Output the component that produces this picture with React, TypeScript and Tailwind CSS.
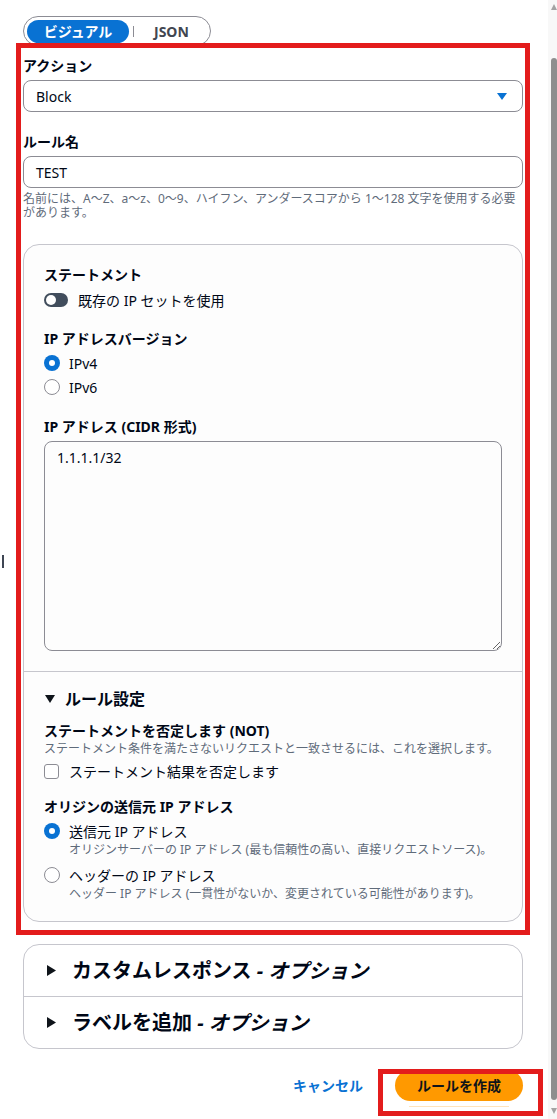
import type { ReactNode } from 'react'

const FONT = "font-['Noto_Sans','Noto_Sans_CJK_JP',sans-serif]"

function Radio({ checked }: { checked?: boolean }) {
  if (checked) {
    return (
      <span className="w-[16px] h-[16px] shrink-0 rounded-full bg-[#0972d3] flex items-center justify-center">
        <span className="w-[6px] h-[6px] rounded-full bg-white" />
      </span>
    )
  }
  return <span className="w-[16px] h-[16px] shrink-0 rounded-full border-[1.5px] border-[#8c8c94] bg-white" />
}

function Label({ children, className = '' }: { children: ReactNode; className?: string }) {
  return <p className={`text-[14px] font-bold leading-[22px] ${className}`}>{children}</p>
}

function CaretRight() {
  return (
    <svg width="9" height="11" viewBox="0 0 9 11" className="shrink-0">
      <path d="M0 0 L9 5.5 L0 11 Z" fill="#0f141a" />
    </svg>
  )
}

export default function App() {
  return (
    <div className={`relative w-[557px] h-[1119px] bg-white flex overflow-hidden text-[#000716] ${FONT}`}>
      <div className="w-[548px] pl-[23px] pr-[25px] flex flex-col">
        {/* mode switch */}
        <div className="mt-[16px] h-[30px] w-[188px] rounded-full border border-[#8c8c94] flex items-center px-[3px]">
          <span className="h-[23px] w-[102px] rounded-full bg-[#0972d3] text-white text-[14px] font-bold flex items-center justify-center">
            ビジュアル
          </span>
          <span className="ml-[4px] w-[1px] h-[11px] bg-[#8c8c94]" />
          <span className="ml-[20px] text-[14px] font-bold text-[#424650]">JSON</span>
        </div>

        <Label className="mt-[9px]">アクション</Label>
        <div className="mt-[3px] h-[32px] rounded-[8px] border border-[#8c8c94] flex items-center pl-[12px] pr-[15px]">
          <span className="text-[14px]">Block</span>
          <svg width="10" height="7" viewBox="0 0 10 7" className="ml-auto">
            <path d="M0 0 L10 0 L5 7 Z" fill="#0972d3" />
          </svg>
        </div>

        <Label className="mt-[19px]">ルール名</Label>
        <div className="mt-[3px] h-[32px] rounded-[8px] border border-[#8c8c94] flex items-center px-[12px]">
          <span className="text-[14px]">TEST</span>
        </div>
        <p className="mt-[4px] text-[12px] leading-[14px] text-[#5f6b7a]">
          名前には、A〜Z、a〜z、0〜9、ハイフン、アンダースコアから 1〜128 文字を使用する必要があります。
        </p>

        {/* statement card */}
        <div className="mt-[24px] rounded-[16px] border border-[#c6c6cd] bg-[#fdfdfd]">
          <div className="px-[20px] pt-[19px] pb-[20px]">
            <Label>ステートメント</Label>
            <div className="mt-[3px] h-[22px] flex items-center gap-[10px]">
              <span className="w-[24px] h-[14px] rounded-full bg-[#414d5c] flex items-center pl-[2px]">
                <span className="w-[10px] h-[10px] rounded-full bg-white" />
              </span>
              <span className="text-[14px]">既存の IP セットを使用</span>
            </div>

            <Label className="mt-[17px]">IP アドレスバージョン</Label>
            <div className="mt-[1px] h-[24px] flex items-center gap-[9px]">
              <Radio checked />
              <span className="text-[14px]">IPv4</span>
            </div>
            <div className="h-[24px] flex items-center gap-[9px]">
              <Radio />
              <span className="text-[14px]">IPv6</span>
            </div>

            <Label className="mt-[17px]">IP アドレス (CIDR 形式)</Label>
            <textarea
              readOnly
              defaultValue="1.1.1.1/32"
              className="mt-[3px] block w-full h-[210px] rounded-[8px] border border-[#8c8c94] bg-[#fdfdfd] px-[12px] py-[5px] text-[14px] leading-[22px] outline-none"
            />
          </div>

          <div className="border-t border-[#c6c6cd] px-[20px] pt-[16px] pb-[19px]">
            <div className="h-[22px] flex items-center">
              <svg width="10" height="8" viewBox="0 0 10 8" className="ml-[1px]">
                <path d="M0 0 L10 0 L5 8 Z" fill="#0f141a" />
              </svg>
              <span className="ml-[10px] text-[16px] font-bold">ルール設定</span>
            </div>

            <p className="mt-[11px] text-[14px] font-bold leading-[20px]">ステートメントを否定します (NOT)</p>
            <p className="text-[12px] leading-[16px] text-[#5f6b7a]">
              ステートメント条件を満たさないリクエストと一致させるには、これを選択します。
            </p>
            <div className="mt-[3px] h-[22px] flex items-center gap-[10px]">
              <span className="w-[15px] h-[15px] rounded-[3px] border-[1.5px] border-[#8c8c94] bg-white" />
              <span className="text-[14px]">ステートメント結果を否定します</span>
            </div>

            <p className="mt-[15px] text-[14px] font-bold leading-[20px]">オリジンの送信元 IP アドレス</p>
            <div className="mt-[3px] h-[22px] flex items-center gap-[9px]">
              <Radio checked />
              <span className="text-[14px]">送信元 IP アドレス</span>
            </div>
            <p className="pl-[25px] text-[12px] leading-[16px] text-[#5f6b7a]">
              オリジンサーバーの IP アドレス (最も信頼性の高い、直接リクエストソース)。
            </p>
            <div className="mt-[6px] h-[22px] flex items-center gap-[9px]">
              <Radio />
              <span className="text-[14px]">ヘッダーの IP アドレス</span>
            </div>
            <p className="pl-[25px] text-[12px] leading-[16px] text-[#5f6b7a]">
              ヘッダー IP アドレス (一貫性がないか、変更されている可能性があります)。
            </p>
          </div>
        </div>

        {/* optional sections */}
        <div className="mt-[22px] rounded-[16px] border border-[#c6c6cd]">
          <div className="h-[51px] flex items-center pl-[23px] gap-[16px]">
            <CaretRight />
            <span className="text-[20px] font-bold">
              カスタムレスポンス <i>- オプション</i>
            </span>
          </div>
          <div className="h-[52px] border-t border-[#c6c6cd] flex items-center pl-[23px] gap-[16px]">
            <CaretRight />
            <span className="text-[20px] font-bold">
              ラベルを追加 <i>- オプション</i>
            </span>
          </div>
        </div>

        <div className="mt-[21px] flex justify-end items-start gap-[32px]">
          <span className="h-[31px] flex items-center text-[14px] font-bold text-[#0972d3]">キャンセル</span>
          <div className="flex flex-col items-center">
            <span className="w-[128px] h-[31px] rounded-full bg-[#ff9900] flex items-center justify-center text-[14px] font-bold text-[#0f141a]">
              ルールを作成
            </span>
            <span className="mt-[5px] w-[100px] h-[1px] bg-[#ffe4bd]" />
          </div>
        </div>
      </div>

      {/* scrollbar */}
      <div className="w-[9px] h-full bg-[#f8f8f8] flex flex-col">
        <svg width="6" height="6" viewBox="0 0 6 6" className="mt-[4px] ml-[3px]">
          <path d="M0 6 L3 0 L6 6 Z" fill="#a3a3a3" />
        </svg>
        <div className="mt-[48px] ml-[3px] w-[6px] h-[1042px] rounded-[3px] bg-[#8e8e8e]" />
        <svg width="6" height="6" viewBox="0 0 6 6" className="mt-[8px] ml-[3px]">
          <path d="M0 0 L6 0 L3 6 Z" fill="#a3a3a3" />
        </svg>
      </div>

      {/* annotations */}
      <div className="absolute left-[16px] top-[43px] w-[514px] h-[892px] border-[5px] border-[#e31c1c] pointer-events-none" />
      <div className="absolute left-[378px] top-[1069px] w-[165px] h-[47px] border-[5px] border-[#e31c1c] pointer-events-none" />
      <div className="absolute left-[2px] top-[555px] w-[2px] h-[13px] bg-[#3f4654]" />
    </div>
  )
}
